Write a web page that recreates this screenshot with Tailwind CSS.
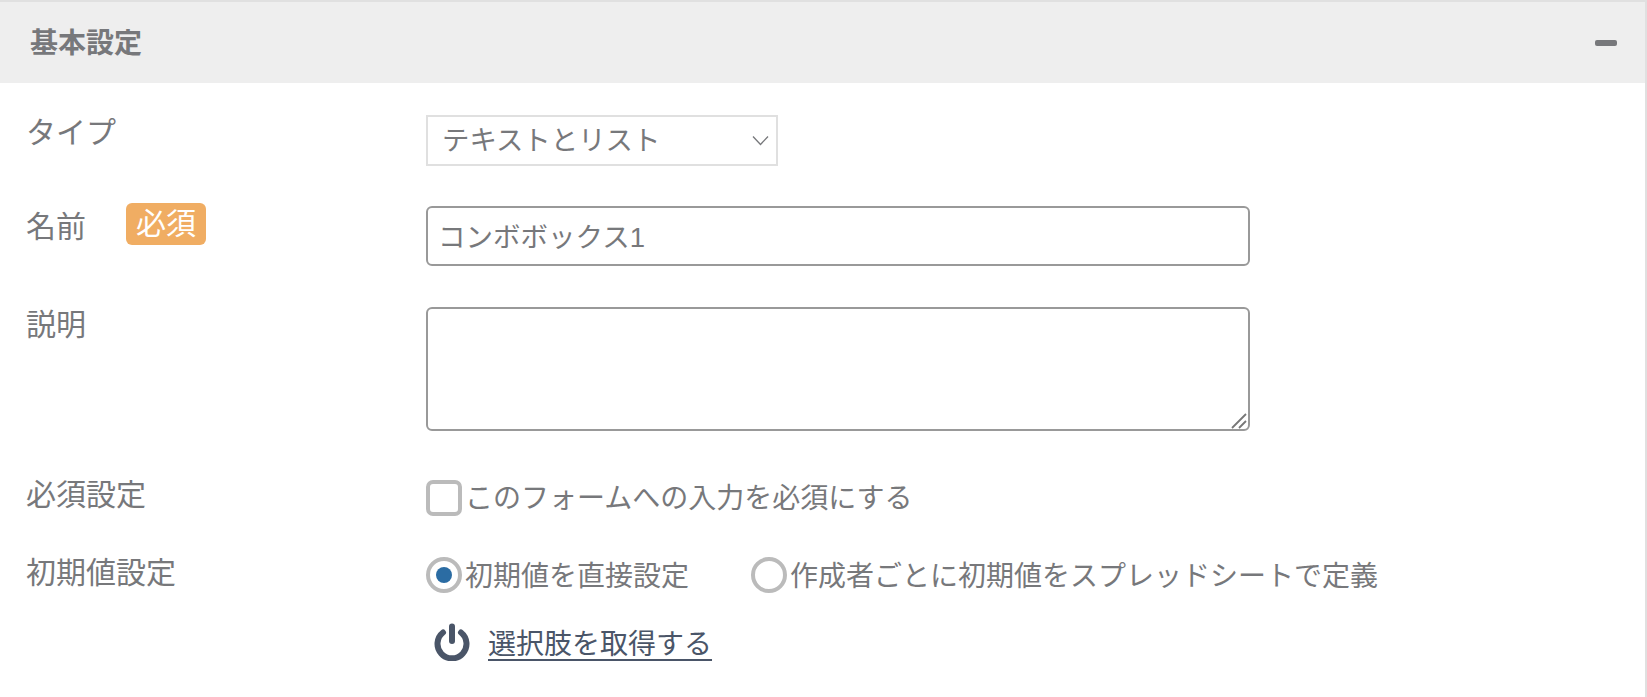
<!DOCTYPE html>
<html lang="ja">
<head>
  <meta charset="UTF-8">
  <title>基本設定</title>
  <script src="https://cdn.jsdelivr.net/npm/@tailwindcss/browser@4"></script>
</head>
<body class="bg-white text-[#77787b] text-[28px] font-['Liberation_Sans','Noto_Sans_CJK_JP',sans-serif] overflow-hidden">
  <div class="h-[697px] border-t-2 border-r-2 border-[#e0e0e0]">
    <div class="h-[81px] bg-[#eeeeee] flex items-center justify-between pl-[30px] pr-[28px]">
      <h2 class="font-bold text-[28px] leading-none pt-[2px]">基本設定</h2>
      <span class="block w-[22px] h-[6px] rounded-[2px] bg-[#77787b]"></span>
    </div>

    <div class="pl-[26px] pt-[32px] flex flex-col">
      <div class="flex h-[51px]">
        <div class="w-[400px] text-[30px] leading-[32px] pt-[2px]">タイプ</div>
        <div class="relative w-[352px] h-[51px]">
          <select class="appearance-none w-full h-full border-2 border-[#e0e0e0] bg-white pl-[14px] text-[27.4px] text-[#77787b] outline-none">
            <option>テキストとリスト</option>
          </select>
          <svg class="absolute right-[9px] top-[20px] pointer-events-none" width="17" height="11" viewBox="0 0 17 11" fill="none" stroke="#77787b" stroke-width="1.3"><path d="M1 1.5 8.5 9.5 16 1.5"/></svg>
        </div>
      </div>

      <div class="flex mt-[40px] h-[60px]">
        <div class="w-[400px] flex items-start pt-[5px]">
          <span class="text-[30px] leading-[32px] w-[100px]">名前</span>
          <span class="-mt-[8px] w-[80px] h-[42px] rounded-[6px] bg-[#f0ad63] text-white text-[30px] flex items-center justify-center leading-none">必須</span>
        </div>
        <input type="text" value="コンボボックス1" class="w-[824px] h-[60px] border-2 border-[#999999] rounded-[6px] px-[10px] pb-[2px] text-[27.5px] text-[#77787b] outline-none">
      </div>

      <div class="flex mt-[41px] h-[124px]">
        <div class="w-[400px] pt-[2px] text-[30px] leading-[32px]">説明</div>
        <div class="relative w-[824px] h-[124px]">
          <textarea class="block w-full h-full resize-none border-2 border-[#999999] rounded-[6px] outline-none"></textarea>
          <svg class="absolute right-[3px] bottom-[2px] pointer-events-none" width="16" height="16" viewBox="0 0 16 16" fill="none" stroke="#777777" stroke-width="1.8"><path d="M1 15 15 1M8 15l7-7"/></svg>
        </div>
      </div>

      <div class="flex mt-[49px] h-[36px]">
        <div class="w-[400px] text-[30px] leading-[32px] -mt-[1px]">必須設定</div>
        <label class="flex items-center">
          <span class="block w-[36px] h-[36px] border-[4px] border-[#bbbbbb] rounded-[7px] bg-white"></span>
          <span class="ml-[3px] leading-[36px] pt-[2px]">このフォームへの入力を必須にする</span>
        </label>
      </div>

      <div class="flex mt-[41px] h-[36px]">
        <div class="w-[400px] text-[30px] leading-[32px]">初期値設定</div>
        <div class="flex items-center">
          <span class="flex items-center justify-center w-[36px] h-[36px] border-[4px] border-[#bbbbbb] rounded-full">
            <span class="block w-[16px] h-[16px] rounded-full bg-[#2b6ca3]"></span>
          </span>
          <span class="ml-[3px] leading-[36px] pt-[3px]">初期値を直接設定</span>
          <span class="ml-[62px] block w-[36px] h-[36px] border-[4px] border-[#bbbbbb] rounded-full"></span>
          <span class="ml-[3px] leading-[36px] pt-[3px]">作成者ごとに初期値をスプレッドシートで定義</span>
        </div>
      </div>

      <div class="flex mt-[30px] h-[38px] pl-[408px] items-center">
        <svg width="36" height="38" viewBox="0 0 36 38" fill="none" stroke="#4a5568" stroke-width="6" stroke-linecap="round"><path d="M9 9.5A14.5 14.5 0 1 0 27 9.5"/><path d="M18 3.5V18"/></svg>
        <a href="#" class="ml-[18px] text-[#4a5568] underline underline-offset-[5px] leading-[36px] pt-[5px]">選択肢を取得する</a>
      </div>
    </div>
  </div>
</body>
</html>
